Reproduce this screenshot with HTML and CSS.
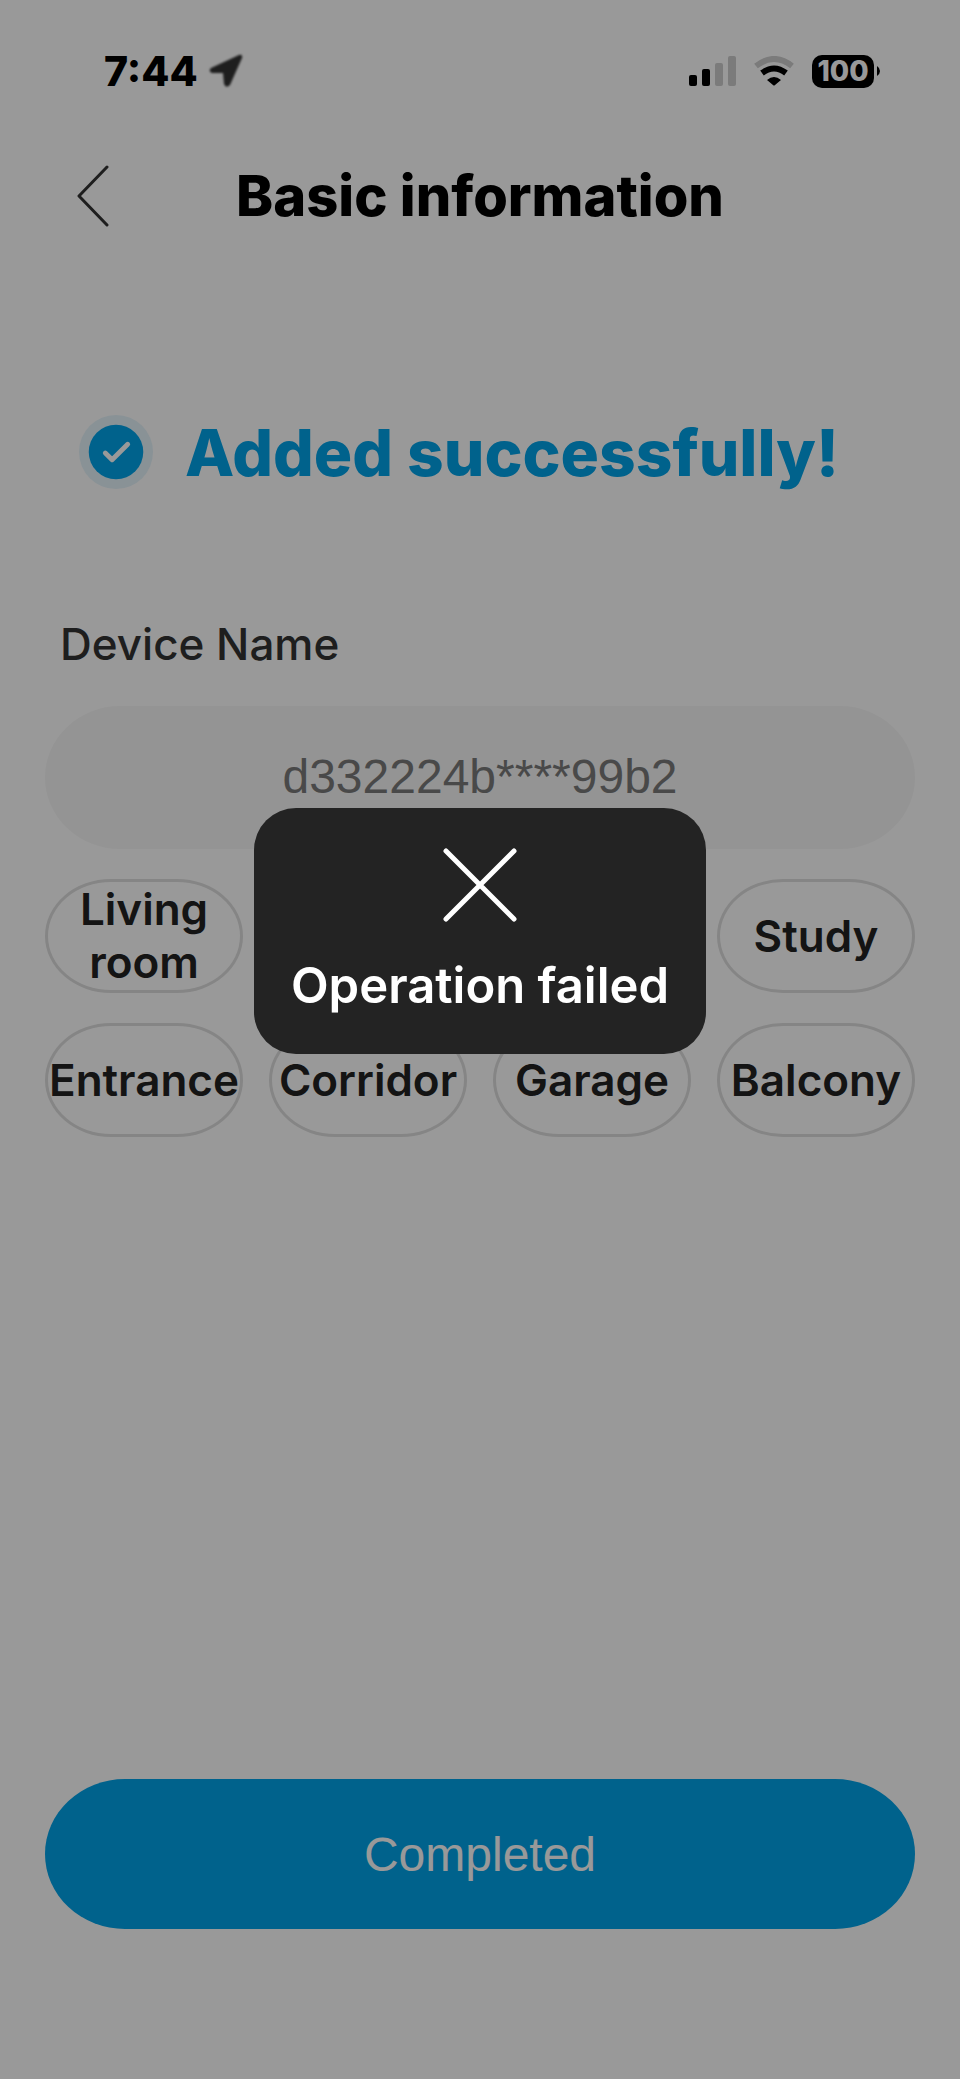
FILE: index.html
```html
<!DOCTYPE html>
<html lang="en">
<head>
    <meta charset="UTF-8">
    <meta name="viewport" content="width=device-width, initial-scale=1.0">
    <title>Basic information</title>
    <link rel="stylesheet" href="styles.css">
</head>
<body>
    <div class="page">
        <div class="status-bar">
            <div class="status-left">
                <span class="time">7:44</span>
                <svg class="location-icon" width="36" height="36" viewBox="0 0 36 36">
                    <path d="M3 15 L31 2 Q35 1 34 5 L22 32 Q18 36 16 31 L15 20 L4 20 Q0 18 3 15 Z" fill="#333"/>
                </svg>
            </div>
            <div class="status-right">
                <svg width="47" height="30" viewBox="0 0 47 30">
                    <rect x="0" y="19" width="8" height="11" rx="2" fill="#000"/>
                    <rect x="13" y="13" width="8" height="17" rx="2" fill="#000"/>
                    <rect x="26" y="7" width="8" height="23" rx="2" fill="#cdcdcd"/>
                    <rect x="39" y="0" width="8" height="30" rx="2" fill="#cdcdcd"/>
                </svg>
                <svg width="42" height="30" viewBox="0 0 42 30">
                    <path d="M3 10 Q21 -4 39 10" fill="none" stroke="#cdcdcd" stroke-width="6"/>
                    <path d="M9 17 Q21 8 33 17" fill="none" stroke="#000" stroke-width="6"/>
                    <path d="M14 24 Q21 18 28 24 L22 29 Q21 30 20 29 Z" fill="#000"/>
                </svg>
                <div class="battery">
                    <span class="battery-level">100</span>
                    <svg width="3" height="10" viewBox="0 0 3 10">
                        <path d="M0 0 Q3 2 3 5 Q3 8 0 10 Z" fill="#000"/>
                    </svg>
                </div>
            </div>
        </div>

        <header class="nav-bar">
            <button type="button" class="back-button" aria-label="Back">
                <svg width="32" height="62" viewBox="0 0 32 62">
                    <path d="M30 2 L2 31 L30 60" fill="none" stroke="#333" stroke-width="3" stroke-linecap="round" stroke-linejoin="round"/>
                </svg>
            </button>
            <h1 class="nav-title">Basic information</h1>
        </header>

        <main class="content">
            <div class="result">
                <svg width="74" height="74" viewBox="0 0 76 76">
                    <circle cx="38" cy="38" r="38" fill="#e5f4fb"/>
                    <circle cx="38" cy="38" r="28" fill="#00a3e9"/>
                    <path d="M27 39 L34 46 L50 30" fill="none" stroke="#fff" stroke-width="5" stroke-linecap="round" stroke-linejoin="round"/>
                </svg>
                <h2 class="result-title">Added successfully!</h2>
            </div>

            <form class="device-form">
                <label class="device-label" for="deviceName">Device Name</label>
                <input class="device-input" type="text" id="deviceName" name="deviceName" value="d332224b****99b2">

                <div class="rooms">
                    <button type="button" class="room">Living room</button>
                    <button type="button" class="room room-last">Study</button>
                    <button type="button" class="room">Entrance</button>
                    <button type="button" class="room">Corridor</button>
                    <button type="button" class="room">Garage</button>
                    <button type="button" class="room">Balcony</button>
                </div>

                <button type="submit" class="submit-button">Completed</button>
            </form>
        </main>
    </div>

    <div class="overlay">
        <div class="toast" role="alert">
            <svg width="74" height="74" viewBox="0 0 74 74">
                <path d="M3 3 L71 71 M71 3 L3 71" fill="none" stroke="#fff" stroke-width="5" stroke-linecap="round"/>
            </svg>
            <span>Operation failed</span>
        </div>
    </div>
</body>
</html>
```

FILE: styles.css
```css
* {
    box-sizing: border-box;
}

body {
    margin: 0;
    font-family: Inter, "Liberation Sans", sans-serif;
    background-color: #fff;
    color: #000;
}

button {
    padding: 0;
    border: none;
    background: none;
    font-family: inherit;
    cursor: pointer;
}

svg {
    display: block;
    flex-shrink: 0;
}

.page {
    display: flex;
    flex-direction: column;
    min-height: 100vh;
}

.status-bar {
    display: flex;
    align-items: center;
    justify-content: space-between;
    height: 142px;
    padding: 0 80px 0 104px;
}

.status-left {
    display: flex;
    align-items: center;
    gap: 10px;
}

.time {
    font-size: 41px;
    font-weight: 800;
}

.location-icon {
    filter: blur(1px);
}

.status-right {
    display: flex;
    align-items: center;
    gap: 17px;
}

.battery {
    display: flex;
    align-items: center;
    gap: 3px;
}

.battery-level {
    width: 62px;
    border-radius: 10px;
    background-color: #000;
    color: #fff;
    font-size: 28px;
    font-weight: 800;
    line-height: 33px;
    text-align: center;
}

.nav-bar {
    display: grid;
    grid-template-columns: 32px 1fr 32px;
    align-items: center;
    height: 108px;
    padding: 0 77px;
}

.nav-title {
    margin: 0;
    font-size: 56px;
    font-weight: 800;
    text-align: center;
}

.content {
    display: flex;
    flex: 1;
    flex-direction: column;
    padding: 158px 45px 150px;
}

.result {
    display: flex;
    align-items: center;
    gap: 32px;
    height: 88px;
    padding: 0 34px;
}

.result-title {
    margin: 0;
    color: #00a3e9;
    font-size: 64px;
    font-weight: 800;
}

.device-form {
    display: flex;
    flex: 1;
    flex-direction: column;
}

.device-label {
    padding: 120px 15px 34px;
    color: #333;
    font-size: 44px;
    font-weight: 500;
    line-height: 56px;
}

.device-input {
    width: 100%;
    height: 143px;
    padding: 0 40px 2px;
    border: none;
    border-radius: 76px / 72px;
    background-color: #f7f7f7;
    color: #7b7b7b;
    font-family: "Liberation Sans", Arial, sans-serif;
    font-size: 48px;
    text-align: center;
}

.rooms {
    display: grid;
    grid-template-columns: repeat(4, 1fr);
    grid-auto-rows: 114px;
    gap: 30px 26px;
    margin: 30px 0;
}

.room {
    border: 3px solid #dedede;
    border-radius: 66px / 57px;
    color: #222;
    font-size: 44px;
    font-weight: 600;
    line-height: 53px;
}

.room-last {
    grid-column: 4;
}

.submit-button {
    height: 150px;
    margin-top: auto;
    border-radius: 80px / 75px;
    background-color: #00a3e9;
    color: #fff;
    font-family: "Liberation Sans", Arial, sans-serif;
    font-size: 48px;
}

.overlay {
    position: fixed;
    inset: 0;
    display: flex;
    align-items: flex-start;
    justify-content: center;
    padding-top: 808px;
    background-color: rgba(0, 0, 0, 0.4);
}

.toast {
    display: flex;
    flex-direction: column;
    align-items: center;
    gap: 34px;
    padding: 40px 37px 38px;
    border-radius: 42px;
    background-color: #232323;
    color: #fff;
    font-size: 49px;
    font-weight: 600;
    line-height: 60px;
}
```
